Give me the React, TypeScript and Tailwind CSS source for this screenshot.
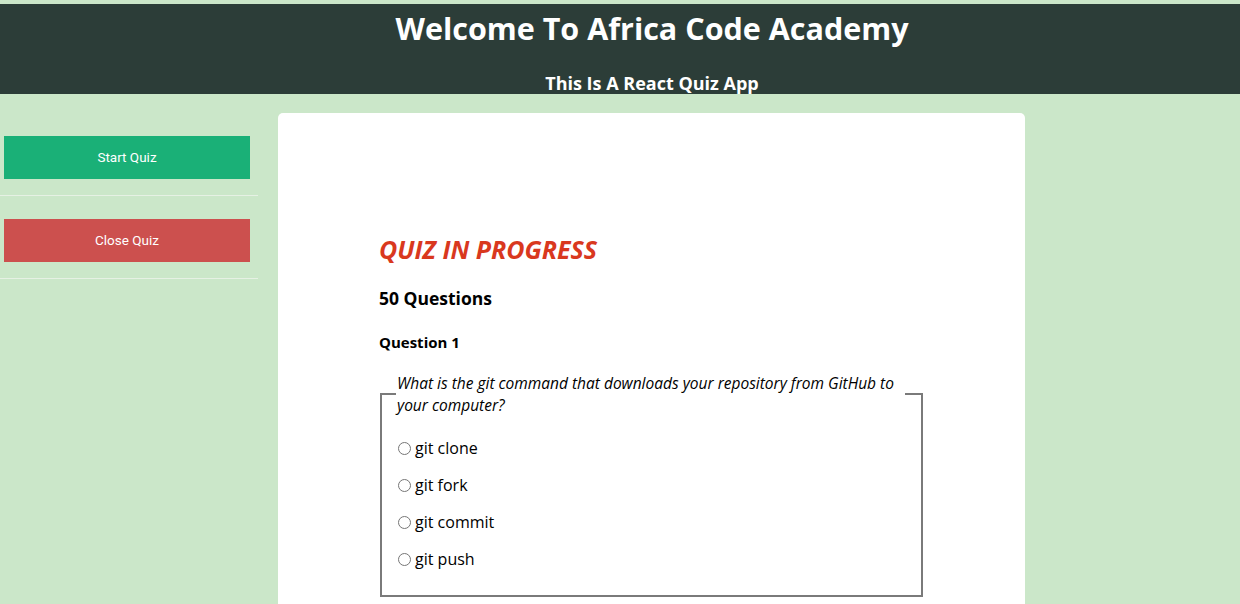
import React from "react";

export default function App() {
  const options = ["git clone", "git fork", "git commit", "git push"];
  return (
    <div className="min-h-[604px] w-full bg-[#cbe7c9] pt-[4px]" style={{ fontFamily: '"Segoe UI", "Open Sans", sans-serif' }}>
      <header className="h-[90px] bg-[#2c3d38] text-white flex flex-col items-center pl-[64px]">
        <h1 className="text-[30.5px] font-bold leading-[46px] mt-[1px]">Welcome To Africa Code Academy</h1>
        <h2 className="text-[18px] font-bold leading-[24px] mt-[20px]">This Is A React Quiz App</h2>
      </header>
      <div className="flex pt-[19px]">
        <aside className="w-[258px] shrink-0 pt-[23px]">
          <div className="pb-[16px] border-b border-[#e6f1e4]">
            <button className="ml-[4px] w-[246px] h-[43px] bg-[#1ab077] text-white text-[13.5px]" style={{ fontFamily: 'Roboto, "Liberation Sans", sans-serif' }}>Start Quiz</button>
          </div>
          <div className="pt-[23px] pb-[16px] border-b border-[#e6f1e4]">
            <button className="ml-[4px] w-[246px] h-[43px] bg-[#cc504e] text-white text-[13.5px]" style={{ fontFamily: 'Roboto, "Liberation Sans", sans-serif' }}>Close Quiz</button>
          </div>
        </aside>
        <main className="ml-[20px] w-[747px] min-h-[491px] bg-white rounded-t-[5px] pl-[101px] pr-[102px] pt-[120px]">
          <h2 className="text-[25px] font-bold italic text-[#d9381e] leading-[32px]">QUIZ IN PROGRESS</h2>
          <h3 className="text-[17.5px] font-bold text-black mt-[21px] leading-[24px]">50 Questions</h3>
          <h4 className="text-[15px] font-bold text-black mt-[22px] leading-[20px]">Question 1</h4>
          <fieldset className="mt-[20px] border-2 border-[#7a7a7a] border-solid ml-[1px] px-[16px] pb-[25px]">
            <legend className="italic text-[15.5px] leading-[22px] text-black px-[1px] -ml-[2px]">
              What is the git command that downloads your repository from GitHub to your computer?
            </legend>
            <div className="flex flex-col gap-[15px] mt-[21px]">
              {options.map((o) => (
                <label key={o} className="flex items-center text-[16px] leading-[22px] text-black">
                  <input type="radio" name="q1" className="m-0 mr-[4px] w-[13px] h-[13px] accent-gray-500" />
                  {o}
                </label>
              ))}
            </div>
          </fieldset>
        </main>
      </div>
    </div>
  );
}
